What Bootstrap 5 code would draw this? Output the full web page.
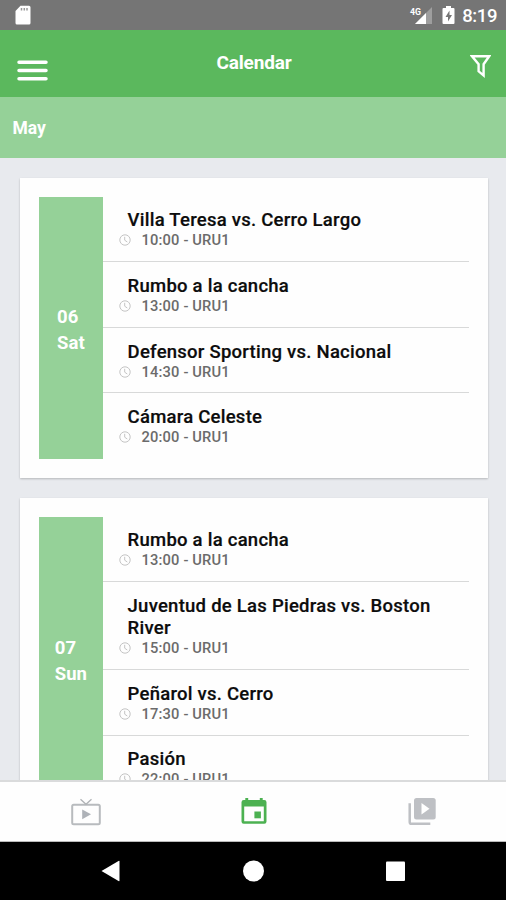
<!DOCTYPE html>
<html lang="en">
<head>
<meta charset="utf-8">
<meta name="viewport" content="width=device-width, initial-scale=1">
<title>Calendar</title>
<link href="https://cdn.jsdelivr.net/npm/bootstrap@5.3.0/dist/css/bootstrap.min.css" rel="stylesheet">
<style>
body{font-family:Roboto,"Liberation Sans",sans-serif;background:#e8eaee;height:900px;color:#0c0c0c}
svg{display:block;flex:none}
.status-strip{height:30px;background:#757575;padding:0 9px 0 15px}
.status-time{font-size:18.5px;font-weight:500;line-height:30px;padding-top:1px;margin-left:7px;letter-spacing:-.4px}
.battery-icon{margin-left:9px}
.app-header{height:67px;background:#5bb85d;padding:0 15px 0 17px;display:grid;grid-template-columns:1fr auto 1fr}
.app-title{font-size:19px;font-weight:700;line-height:24px;margin-top:21px;letter-spacing:-.15px}
.menu-icon{margin-top:29px}
.filter-icon{margin-top:24px}
.month-strip{height:61px;background:#95d198;padding:1px 12.5px 0;font-size:17.5px;font-weight:700}
.agenda{min-height:0;padding:20px 18.5px 0 19.5px}
.day-card{background:#fefefe;padding:18.7px 18.7px 18.7px 19.2px;margin-bottom:20.3px;box-shadow:0 1px 2px rgba(0,0,0,.22)}
.day-label{width:64.4px;background:#95d198;font-size:18.5px;line-height:26px;font-weight:700;padding-top:3.6px}
.event-row{padding:12.7px 0 10.5px;border-bottom:1px solid #d8d9d9}
.event-row:last-child{border-color:transparent}
.event-title{font-size:18.5px;line-height:22px;font-weight:500;padding:0 30px 0 24.5px;letter-spacing:.25px;-webkit-text-stroke:.2px}
.event-meta{font-size:14.7px;line-height:19.4px;font-weight:500;color:#6b6b6b;padding-left:15.5px;letter-spacing:.15px}
.event-meta svg{margin-right:11px;margin-top:-1.5px}
.tab-strip{height:62px;background:#fefefe;border-top:2px solid #dadbdc;border-bottom:1px solid #bbb;padding-left:2px}
.system-nav{height:58px}
</style>
<script src="https://cdn.jsdelivr.net/npm/bootstrap@5.3.0/dist/js/bootstrap.bundle.min.js"></script>
</head>
<body class="d-flex flex-column overflow-hidden">
<svg width="0" height="0" class="position-absolute" aria-hidden="true"><symbol id="clock" viewBox="0 0 12 12"><circle cx="6" cy="6" r="5.2" fill="none" stroke="#c4c4c4"/><path d="M5.7 2.8V6.2L8.3 8" fill="none" stroke="#c4c4c4"/></symbol></svg>

<div class="status-strip flex-shrink-0 d-flex align-items-center text-white">
  <svg width="16" height="20" viewBox="0 0 16 20"><path d="M5.5 .8H14a1.5 1.5 0 0 1 1.5 1.5V18a1.5 1.5 0 0 1-1.5 1.5H2A1.5 1.5 0 0 1 .5 18V6z" fill="#fff"/><path d="M6.5 3v2.500M9.3 3v2.500M12 3v2.500" stroke="#999" stroke-width="1.5"/></svg>
  <svg class="ms-auto" width="24" height="20" viewBox="0 0 24 20"><path d="M6 19L23 2v17z" fill="#9e9e9e"/><path d="M6 19L17 8v11z" fill="#fff"/><text x="1" y="9.500" font-size="9.5" font-weight="700" fill="#fff" textLength="11" lengthAdjust="spacingAndGlyphs" stroke="#757575" stroke-width="1" paint-order="stroke">4G</text></svg>
  <svg class="battery-icon" width="13" height="20" viewBox="0 0 13 20"><path d="M4 1h5v2h2.5q1 0 1 1v14q0 1-1 1h-10q-1 0-1-1V4q0-1 1-1H4z" fill="#fff"/><path d="M7.5 5.5L3.5 12H6v4.5l4-6.5H7.5z" fill="#757575"/></svg>
  <span class="status-time">8:19</span>
</div>

<header class="app-header flex-shrink-0 text-white">
  <svg class="menu-icon" width="32" height="23" viewBox="0 0 32 23"><path d="M2 3.2H29M2 11.5H29M2 19.7H29" stroke="#fff" stroke-width="3.5" stroke-linecap="round"/></svg>
  <h1 class="app-title mb-0">Calendar</h1>
  <svg class="filter-icon ms-auto" width="21" height="25" viewBox="0 0 21 25"><path d="M2 2.2H19.200L13.6 10.2V21.500L8.600 17.300V10.2z" fill="none" stroke="#fff" stroke-width="2.400"/></svg>
</header>

<div class="month-strip flex-shrink-0 d-flex align-items-center text-white">May</div>

<main class="agenda flex-grow-1 overflow-hidden">
  <section class="day-card d-flex">
    <div class="day-label flex-shrink-0 d-flex align-items-center justify-content-center text-white"><div>06<br>Sat</div></div>
    <div class="flex-grow-1">
      <div class="event-row"><div class="event-title">Villa Teresa vs. Cerro Largo</div><div class="event-meta d-flex align-items-center"><svg width="12" height="12"><use href="#clock"/></svg>10:00 - URU1</div></div>
      <div class="event-row"><div class="event-title">Rumbo a la cancha</div><div class="event-meta d-flex align-items-center"><svg width="12" height="12"><use href="#clock"/></svg>13:00 - URU1</div></div>
      <div class="event-row"><div class="event-title">Defensor Sporting vs. Nacional</div><div class="event-meta d-flex align-items-center"><svg width="12" height="12"><use href="#clock"/></svg>14:30 - URU1</div></div>
      <div class="event-row"><div class="event-title">Cámara Celeste</div><div class="event-meta d-flex align-items-center"><svg width="12" height="12"><use href="#clock"/></svg>20:00 - URU1</div></div>
    </div>
  </section>
  <section class="day-card d-flex">
    <div class="day-label flex-shrink-0 d-flex align-items-center justify-content-center text-white"><div>07<br>Sun</div></div>
    <div class="flex-grow-1">
      <div class="event-row"><div class="event-title">Rumbo a la cancha</div><div class="event-meta d-flex align-items-center"><svg width="12" height="12"><use href="#clock"/></svg>13:00 - URU1</div></div>
      <div class="event-row"><div class="event-title">Juventud de Las Piedras vs. Boston River</div><div class="event-meta d-flex align-items-center"><svg width="12" height="12"><use href="#clock"/></svg>15:00 - URU1</div></div>
      <div class="event-row"><div class="event-title">Peñarol vs. Cerro</div><div class="event-meta d-flex align-items-center"><svg width="12" height="12"><use href="#clock"/></svg>17:30 - URU1</div></div>
      <div class="event-row"><div class="event-title">Pasión</div><div class="event-meta d-flex align-items-center"><svg width="12" height="12"><use href="#clock"/></svg>22:00 - URU1</div></div>
    </div>
  </section>
</main>

<nav class="tab-strip flex-shrink-0 d-flex align-items-center">
  <div class="col d-flex justify-content-center"><svg width="30" height="28" viewBox="0 0 30 28"><rect x="1.2" y="6.8" width="27.6" height="19.4" rx="1.5" fill="none" stroke="#b8bbbe" stroke-width="2"/><path d="M9.5 1.2L15 6.3L20.5 1.2" fill="none" stroke="#b0b3b6" stroke-width="1.3"/><path d="M11.2 11.5L20 16.3L11.2 21.2z" fill="#aeb2b8"/></svg></div>
  <div class="col d-flex justify-content-center"><svg width="26" height="28" viewBox="0 0 26 28"><path fill="#4cb151" fill-rule="evenodd" d="M4.3 0h2.9V2h11.6V0h2.9V2h1.6q2.2 0 2.2 2.3v19.2q0 2.300-2.200 2.300H2.700Q.5 25.800.5 23.500V4.300Q.5 2 2.700 2h1.600zM3.200 8.500v14.700h19.600V8.500z"/><rect x="13.400" y="13.500" width="6.500" height="6.800" fill="#4cb151"/></svg></div>
  <div class="col d-flex justify-content-center"><svg width="28" height="28" viewBox="0 0 28 28"><path d="M1.700 5.300V23.700Q1.700 25.800 3.300 25.800H22.300" fill="none" stroke="#bec0c4" stroke-width="2.500"/><rect x="6" y="0" width="21.700" height="21.500" rx="2.500" fill="#bec0c4"/><path d="M13.500 5L21.500 10.700L13.500 16.500z" fill="#fff"/></svg></div>
</nav>

<div class="system-nav flex-shrink-0 d-flex align-items-center justify-content-center bg-black">
  <svg width="19" height="22" viewBox="0 0 19 22"><path d="M.5 11L17.500 1Q18.500 .5 18.500 1.500V20.500Q18.500 21.500 17.500 21z" fill="#fff"/></svg>
  <svg width="265" height="22" viewBox="0 0 265 22"><circle cx="133.500" cy="11" r="10.500" fill="#fff"/></svg>
  <svg width="20" height="22" viewBox="0 0 20 22"><rect x="1" y="1.500" width="19" height="19.500" rx="1" fill="#fff"/></svg>
</div>
</body>
</html>
